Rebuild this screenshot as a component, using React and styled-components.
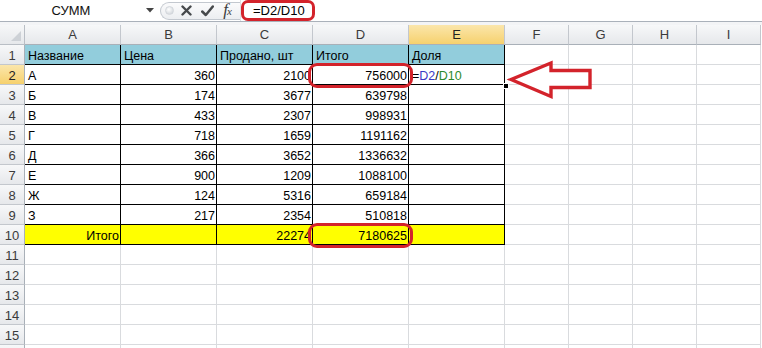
import React from "react";
import styled, { createGlobalStyle, css } from "styled-components";

const GlobalStyle = createGlobalStyle`
  html, body { margin: 0; padding: 0; background: #ffffff; overflow: hidden; }
  body { font-family: "Liberation Sans", Arial, sans-serif; }
`;

const RED = "#d3232b";

const Page = styled.div`
  position: relative;
  width: 762px;
  height: 348px;
  overflow: hidden;
  background: #fff;
`;

const FormulaBar = styled.div`
  display: flex;
  align-items: center;
  height: 22px;
  box-sizing: border-box;
  border-bottom: 1px solid #aab1ba;
  background: #fff;
`;

const NameBox = styled.div`
  width: 142px;
  text-align: center;
  font-size: 13px;
  color: #111;
`;

const DropArrow = styled.div`
  width: 16px;
  display: flex;
  justify-content: center;
  svg { display: block; }
`;

const Pill = styled.div`
  margin-left: 2px;
  width: 80px;
  height: 18px;
  box-sizing: border-box;
  border: 1px solid #c3c8cf;
  border-right: none;
  border-radius: 10px 0 0 10px;
  background: linear-gradient(#fbfbfc, #eceef1);
  display: flex;
  align-items: center;
`;

const Dot = styled.div`
  width: 7px;
  height: 7px;
  margin-left: 4px;
  border-radius: 50%;
  background: radial-gradient(circle at 40% 35%, #ffffff, #c9ced4);
  border: 1px solid #d3d7dc;
`;

const IconSlot = styled.div`
  width: ${(p) => p.$w}px;
  display: flex;
  justify-content: center;
  align-items: center;
  svg { display: block; }
`;

const Fx = styled.span`
  font-family: "Liberation Serif", "Times New Roman", serif;
  font-style: italic;
  font-size: 17px;
  line-height: 17px;
  color: #3c3c3c;
  letter-spacing: -1px;
  small { font-size: 11px; }
`;

const FormulaInput = styled.div`
  flex: 1;
  height: 100%;
  display: flex;
  align-items: center;
  padding-left: 12px;
  font-size: 13px;
  color: #000;
  border-left: 1px solid #dde0e4;
`;

const Strip = styled.div`
  height: 3px;
  background: #f3f4f6;
`;

const Sheet = styled.div`
  display: grid;
  grid-template-columns: 25px repeat(5, 96px) repeat(4, 64px);
  grid-auto-rows: 20px;
  font-size: 12.5px;
`;

const Corner = styled.div`
  box-sizing: border-box;
  border-right: 1px solid #b9bec5;
  border-bottom: 1px solid #b9bec5;
  background: linear-gradient(#f6f7f8, #e6e8eb);
  position: relative;
  &::after {
    content: "";
    position: absolute;
    right: 3px;
    bottom: 3px;
    border-style: solid;
    border-width: 0 0 10px 10px;
    border-color: transparent transparent #cdd1d6 transparent;
  }
`;

const headerBg = (active) =>
  active
    ? css`background: linear-gradient(#fbe6ab, #f6d16e); color: #222;`
    : css`background: linear-gradient(#f7f8f9, #e6e8eb); color: #3b3b3b;`;

const ColHead = styled.div`
  box-sizing: border-box;
  border-right: 1px solid #c3c7cd;
  border-bottom: 1px solid #a9b0b8;
  display: flex;
  align-items: center;
  justify-content: center;
  font-size: 13px;
  ${(p) => headerBg(p.$active)}
`;

const RowHead = styled.div`
  box-sizing: border-box;
  border-right: 1px solid #a9b0b8;
  border-bottom: 1px solid #c3c7cd;
  display: flex;
  align-items: flex-end;
  justify-content: center;
  line-height: 16px;
  font-size: 13px;
  ${(p) => headerBg(p.$active)}
`;

const Cell = styled.div`
  box-sizing: border-box;
  border-right: 1px solid ${(p) => (p.$table ? "#000" : "#d9dbde")};
  border-bottom: 1px solid ${(p) => (p.$table ? "#000" : "#d9dbde")};
  background: ${(p) => p.$fill || "#fff"};
  display: flex;
  align-items: flex-end;
  justify-content: ${(p) => (p.$right ? "flex-end" : "flex-start")};
  padding: 0 ${(p) => (p.$right ? "1px" : "0")} 0 ${(p) => (p.$right ? "0" : "3px")};
  line-height: 16px;
  color: #000;
  white-space: nowrap;
  overflow: hidden;
`;

const Ref = styled.span`
  color: ${(p) => p.$c};
`;

const Highlight = styled.div`
  position: absolute;
  box-sizing: border-box;
  border: 3.5px solid ${RED};
  border-radius: ${(p) => p.$r}px;
  pointer-events: none;
`;

const FillHandle = styled.div`
  position: absolute;
  left: 503px;
  top: 83px;
  width: 4px;
  height: 4px;
  background: #000;
  border: 1px solid #fff;
`;

const Arrow = styled.svg`
  position: absolute;
  left: 505px;
  top: 58px;
`;

const BLUE = "#92cddc";
const YELLOW = "#ffff00";

const cols = ["A", "B", "C", "D", "E", "F", "G", "H", "I"];

const data = [
  ["Название", "Цена", "Продано, шт", "Итого", "Доля"],
  ["А", "360", "2100", "756000", "formula"],
  ["Б", "174", "3677", "639798", ""],
  ["В", "433", "2307", "998931", ""],
  ["Г", "718", "1659", "1191162", ""],
  ["Д", "366", "3652", "1336632", ""],
  ["Е", "900", "1209", "1088100", ""],
  ["Ж", "124", "5316", "659184", ""],
  ["З", "217", "2354", "510818", ""],
  ["Итого", "", "22274", "7180625", ""],
];

const Formula = () => (
  <>
    =<Ref $c="#3a3ac4">D2</Ref>/<Ref $c="#2d8a2d">D10</Ref>
  </>
);

export default function App() {
  const rows = [];
  for (let r = 1; r <= 16; r++) {
    rows.push(
      <RowHead key={`rh${r}`} $active={r === 2}>
        {r <= 15 ? r : ""}
      </RowHead>
    );
    for (let c = 0; c < 9; c++) {
      const inTable = r <= 10 && c < 5;
      let content = "";
      let right = false;
      let fill;
      if (inTable) {
        const v = data[r - 1][c];
        if (r === 1) {
          fill = BLUE;
          content = v;
        } else if (r === 10) {
          fill = YELLOW;
          content = v;
          right = true;
        } else if (v === "formula") {
          content = <Formula />;
        } else {
          right = c > 0;
          content = v;
        }
      }
      rows.push(
        <Cell key={`c${r}-${c}`} $table={inTable} $right={right} $fill={fill}>
          {content}
        </Cell>
      );
    }
  }

  return (
    <Page>
      <GlobalStyle />
      <FormulaBar>
        <NameBox>СУММ</NameBox>
        <DropArrow>
          <svg width="8" height="5" viewBox="0 0 8 5">
            <path d="M0 0 H8 L4 4.5 Z" fill="#444" />
          </svg>
        </DropArrow>
        <Pill>
          <Dot />
          <IconSlot $w={24}>
            <svg width="11" height="11" viewBox="0 0 11 11">
              <path d="M1.5 1.5 L9.5 9.5 M9.5 1.5 L1.5 9.5" stroke="#46494c" strokeWidth="2.4" strokeLinecap="round" />
            </svg>
          </IconSlot>
          <IconSlot $w={18}>
            <svg width="13" height="12" viewBox="0 0 13 12">
              <path d="M1.2 6.5 L4.8 10 L11.8 1.5" stroke="#46494c" strokeWidth="2.5" fill="none" strokeLinecap="round" strokeLinejoin="round" />
            </svg>
          </IconSlot>
          <IconSlot $w={22}>
            <Fx>
              f<small>x</small>
            </Fx>
          </IconSlot>
        </Pill>
        <FormulaInput>=D2/D10</FormulaInput>
      </FormulaBar>
      <Strip />
      <Sheet>
        <Corner />
        {cols.map((c) => (
          <ColHead key={c} $active={c === "E"}>
            {c}
          </ColHead>
        ))}
        {rows}
      </Sheet>

      <Highlight $r={7} style={{ left: 241, top: 0, width: 74, height: 21 }} />
      <Highlight $r={9} style={{ left: 308, top: 63, width: 105, height: 25 }} />
      <Highlight $r={9} style={{ left: 308, top: 223, width: 105, height: 25 }} />
      <FillHandle />
      <Arrow width="90" height="45" viewBox="505 58 90 45">
        <path
          d="M511 79.5 L551 63 L551 70.5 L590 70.5 L590 87.5 L551 87.5 L551 96.5 Z"
          fill="#fff"
          stroke={RED}
          strokeWidth="3.4"
          strokeLinejoin="miter"
        />
      </Arrow>
    </Page>
  );
}
